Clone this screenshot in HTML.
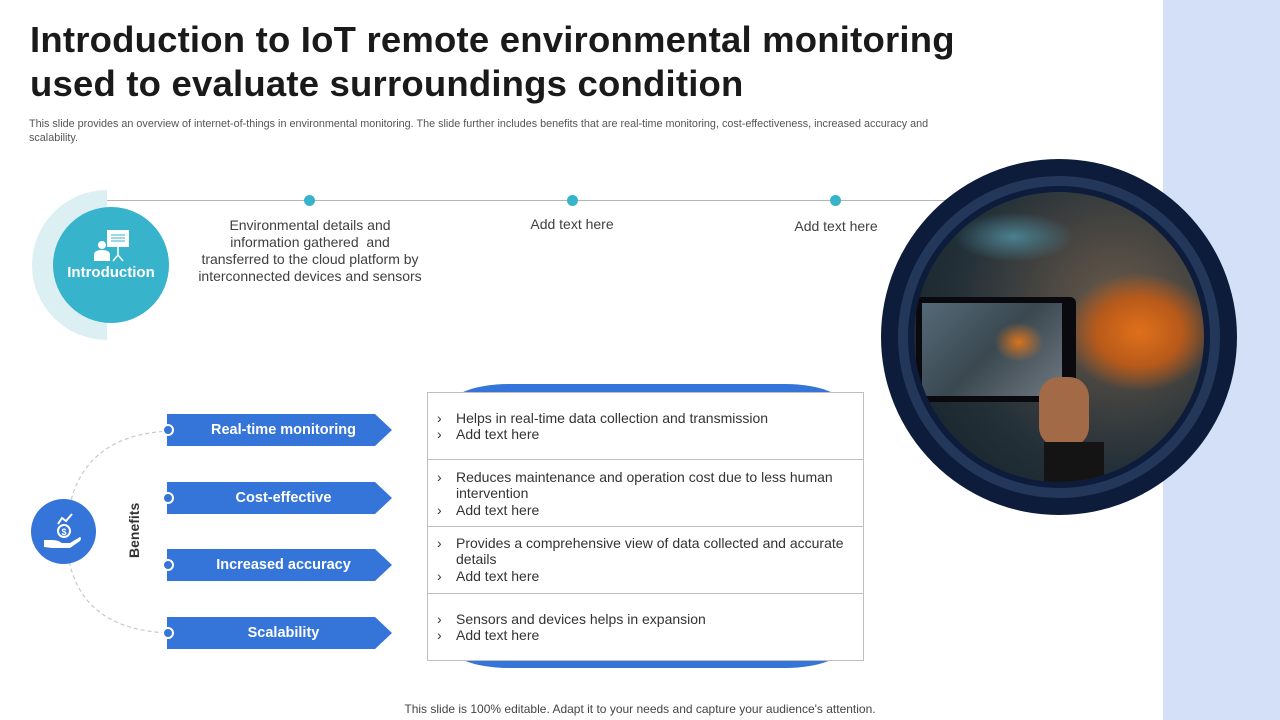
<!DOCTYPE html>
<html><head><meta charset="utf-8"><style>
*{margin:0;padding:0;box-sizing:border-box}
body{width:1280px;height:720px;position:relative;background:#fff;font-family:"Liberation Sans",Arial,sans-serif;overflow:hidden;color:#333}
.abs{position:absolute}
h1{position:absolute;left:30px;top:18px;font-size:36.5px;line-height:44px;font-weight:bold;color:#1a1a1a;letter-spacing:0.2px}
.sub{left:29px;top:117px;width:935px;font-size:10.8px;line-height:14px;color:#555}
.tl{font-size:14px;line-height:17px;color:#404040;text-align:center}
.dot{width:11px;height:11px;border-radius:50%;background:#38b3cc}
.arrow{position:absolute;left:167px;width:225px;height:32px;background:#3574d8;clip-path:polygon(0 0,208px 0,225px 16px,208px 32px,0 32px);color:#fff;font-weight:bold;font-size:14.5px;line-height:32px;text-align:center;padding-left:8px}
.ad{position:absolute;left:162px;width:12px;height:12px;border-radius:50%;background:#3574d8;border:2px solid #fff}
.row{position:absolute;left:427px;width:437px;border:1px solid #bfbfbf;background:#fff;font-size:14px;line-height:16.3px;color:#333;padding:0 10px 0 28px}
.row p{position:relative}
.row p:before{content:"›";position:absolute;left:-19px}
.foot{left:0;width:1280px;top:702px;text-align:center;font-size:12px;color:#444}
</style></head><body>
<div class="abs" style="left:1163px;top:0;width:117px;height:720px;background:#d3e0f8"></div>
<h1>Introduction to IoT remote environmental monitoring<br>used to evaluate surroundings condition</h1>
<div class="abs sub">This slide provides an overview of internet-of-things in environmental monitoring. The slide further includes benefits that are real-time monitoring, cost-effectiveness, increased accuracy and scalability.</div>

<div class="abs" style="left:107px;top:200px;width:850px;height:1px;background:#b5b5b5"></div>
<div class="abs" style="left:32px;top:190px;width:150px;height:150px;border-radius:50%;background:#dcf0f4;clip-path:inset(0 75px 0 0)"></div>
<div class="abs" style="left:53px;top:207px;width:116px;height:116px;border-radius:50%;background:#38b3cc"></div>
<svg class="abs" style="left:93px;top:229px" width="38" height="34" viewBox="0 0 38 34"><rect x="14" y="1" width="22" height="17" fill="#fff"/><path d="M18 6h14M18 9h14M18 12h14" stroke="#38b3cc" stroke-width="1"/><path d="M25 18v8l-5 6M25 26l5 6" stroke="#fff" stroke-width="1.5" fill="none"/><circle cx="9" cy="16" r="4" fill="#fff"/><path d="M1 32v-6q0-5 8-5q8 0 8 5v6z" fill="#fff"/></svg>
<div class="abs" style="left:53px;top:264px;width:116px;text-align:center;color:#fff;font-weight:bold;font-size:15px">Introduction</div>

<div class="abs dot" style="left:304px;top:195px"></div>
<div class="abs dot" style="left:567px;top:195px"></div>
<div class="abs dot" style="left:830px;top:195px"></div>
<div class="abs tl" style="left:190px;top:217px;width:240px">Environmental details and<br>information gathered &nbsp;and<br>transferred to the cloud platform by<br>interconnected devices and sensors</div>
<div class="abs tl" style="left:472px;top:216px;width:200px">Add text here</div>
<div class="abs tl" style="left:736px;top:218px;width:200px">Add text here</div>

<div class="abs" style="left:881px;top:159px;width:356px;height:356px;border-radius:50%;background:#0c1c3a"></div>
<div class="abs" style="left:898px;top:176px;width:322px;height:322px;border-radius:50%;border:10px solid #22375a"></div>
<div class="abs" style="left:914px;top:192px;width:290px;height:290px;border-radius:50%;overflow:hidden;background:radial-gradient(circle at 70% 40%,#6a5a4a,#233038 60%,#152028)">
 <div class="abs" style="left:150px;top:80px;width:150px;height:120px;background:radial-gradient(ellipse,#e0701a 0%,#b85a1a 40%,transparent 70%)"></div>
 <div class="abs" style="left:40px;top:20px;width:120px;height:50px;background:radial-gradient(ellipse,#4a8090,transparent 70%)"></div>
 <div class="abs" style="left:2px;top:105px;width:160px;height:105px;background:#0a0a0e;border-radius:6px"></div>
 <div class="abs" style="left:8px;top:111px;width:140px;height:93px;background:linear-gradient(135deg,#546a78,#3a4850 50%,#707880);"></div>
 <div class="abs" style="left:80px;top:130px;width:50px;height:40px;background:radial-gradient(ellipse,#d8741e,transparent 70%)"></div>
 <div class="abs" style="left:125px;top:185px;width:50px;height:70px;background:#a26a46;border-radius:20px"></div>
 <div class="abs" style="left:130px;top:250px;width:60px;height:60px;background:#141414"></div>
</div>

<svg class="abs" style="left:60px;top:425px" width="120" height="215"><path d="M110 6Q20 10 8 90M8 130Q20 205 110 208" stroke="#c8c8c8" stroke-width="1.2" stroke-dasharray="4 3" fill="none"/></svg>
<div class="abs" style="left:31px;top:499px;width:65px;height:65px;border-radius:50%;background:#3574d8"></div>
<svg class="abs" style="left:42px;top:512px" width="42" height="40" viewBox="0 0 42 40"><circle cx="22" cy="19" r="6" fill="none" stroke="#fff" stroke-width="2"/><text x="22" y="23" font-size="9" fill="#fff" text-anchor="middle" font-family="Liberation Sans" font-weight="bold">$</text><path d="M16 12l4-6 4 3 6-7" stroke="#fff" stroke-width="2" fill="none"/><path d="M2 28h8q6 0 10 3h8l10-6q2 1 0 4l-10 7h-18l-8-1z" fill="#fff"/></svg>
<div class="abs" style="left:126px;top:558px;transform:rotate(-90deg);transform-origin:0 0;font-weight:bold;font-size:14px;color:#333">Benefits</div>

<div class="arrow" style="top:414px">Real-time monitoring</div><div class="ad" style="top:424px"></div>
<div class="arrow" style="top:482px">Cost-effective</div><div class="ad" style="top:492px"></div>
<div class="arrow" style="top:549px">Increased accuracy</div><div class="ad" style="top:559px"></div>
<div class="arrow" style="top:617px">Scalability</div><div class="ad" style="top:627px"></div>

<div class="abs" style="left:448px;top:384px;width:398px;height:284px;background:#3574d8;border-radius:60px/24px"></div>
<div class="row" style="top:392px;height:68px;padding-top:17px"><p>Helps in real-time data collection and transmission</p><p>Add text here</p></div>
<div class="row" style="top:459px;height:68px;padding-top:9px"><p>Reduces maintenance and operation cost due to less human intervention</p><p>Add text here</p></div>
<div class="row" style="top:526px;height:68px;padding-top:8px"><p>Provides a comprehensive view of data collected and accurate details</p><p>Add text here</p></div>
<div class="row" style="top:593px;height:68px;padding-top:17px"><p>Sensors and devices helps in expansion</p><p>Add text here</p></div>

<div class="abs foot">This slide is 100% editable. Adapt it to your needs and capture your audience's attention.</div>
</body></html>
